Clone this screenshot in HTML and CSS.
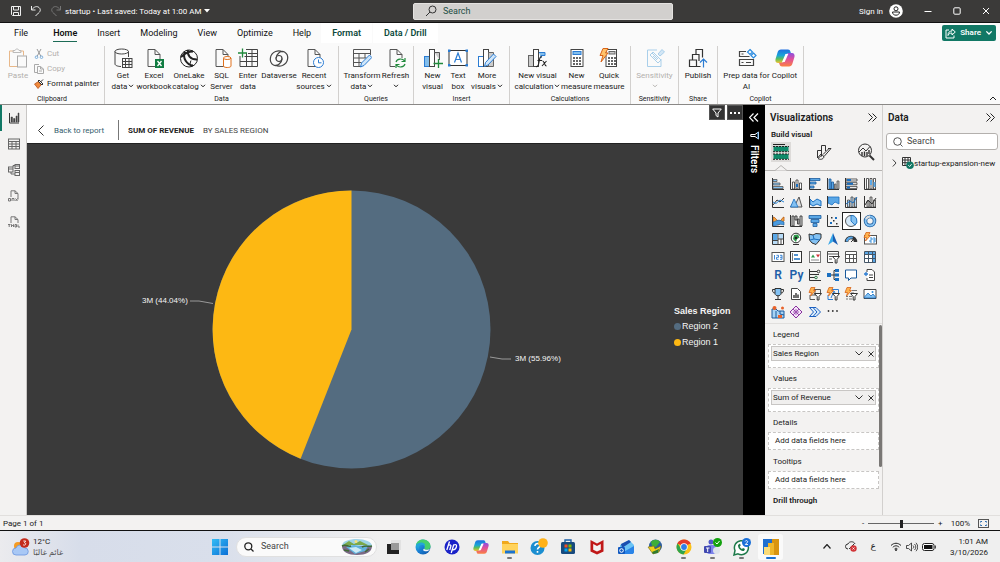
FILE: index.html
```html
<!DOCTYPE html>
<html lang="en">
<head>
<meta charset="utf-8">
<title>startup</title>
<link rel="stylesheet" href="styles.css">
</head>
<body>
<svg class="defs" aria-hidden="true">
  <symbol id="chev" viewBox="0 0 6 4"><path d="M1 .8l2 2 2-2" fill="none" stroke="currentColor"/></symbol>
  <symbol id="page" viewBox="0 0 20 20"><path d="M4 1.500h7l5 5V18.500H4zM11 1.500v5h5" fill="#fafafa" stroke="#555"/></symbol>
  <symbol id="ax" viewBox="0 0 14 14"><path d="M1.500 1v11.500H13" fill="none" stroke="#333"/></symbol>
  <symbol id="bolt" viewBox="0 0 14 14"><path d="M3 .5h4L5.500 3.500h2L2.500 9l1-3.500H1z" fill="#ffb24d" stroke="#d8641a" stroke-width=".8"/></symbol>
  <symbol id="fun" viewBox="0 0 14 14"><path d="M6.500 6.500h7L11 9.500v3.500H9.200V9.500z" fill="#fff" stroke="#333"/></symbol>
  <symbol id="copilot" viewBox="0 0 20 20">
    <path d="M6 1.500h7c1.500 0 2 .8 2.400 2l.6 2h-3c-1.500 0-2.300.8-2.800 2.200L8 13.500c-.4 1.300-1.200 1.500-2.500 1.500H3C.8 15-.1 13 .7 10.500l2-6.500C3.200 2.500 4.200 1.500 6 1.500z" fill="url(#cpa)"/>
    <path d="M14 18.500H7c-1.500 0-2-.8-2.400-2L4 14.800h2.500c1.500 0 2.300-.8 2.800-2.200L12 6.500c.4-1.300 1.200-1.500 2.500-1.500H17c2.200 0 3.100 2 2.300 4.500l-2 6.500c-.5 1.500-1.500 2.500-3.300 2.500z" fill="url(#cpb)"/>
    <path d="M10.500 6h2.800L9.700 14H7z" fill="#fff"/>
  </symbol>
  <linearGradient id="cpa" x1="0" y1="0" x2="0" y2="1"><stop offset="0" stop-color="#1f6fe0"/><stop offset=".45" stop-color="#18a5d8"/><stop offset=".7" stop-color="#5bbf5a"/><stop offset="1" stop-color="#f2c230"/></linearGradient>
  <linearGradient id="cpb" x1="0" y1="0" x2="0" y2="1"><stop offset="0" stop-color="#8a4fe0"/><stop offset=".45" stop-color="#e04f9c"/><stop offset="1" stop-color="#fb8040"/></linearGradient>
  <linearGradient id="edge" x1="0" y1="0" x2="1" y2="1"><stop offset="0" stop-color="#2cc4e8"/><stop offset=".5" stop-color="#1a7fd4"/><stop offset="1" stop-color="#0c4fa0"/></linearGradient>
  <linearGradient id="win" x1="0" y1="0" x2="1" y2="1"><stop offset="0" stop-color="#35bdf5"/><stop offset="1" stop-color="#0a6fd6"/></linearGradient>
</svg>

<header class="titlebar">
  <div class="title-left">
    <button class="plain" aria-label="Save"><svg width="12" height="12" viewBox="0 0 12 12" fill="none" stroke="#eee"><path d="M1.500 1.500h9v9h-8l-1-1zM3.500 1.500v3.500h5V1.500M3.500 10.500V7.500h5v3"/></svg></button>
    <button class="plain" aria-label="Undo"><svg width="12" height="12" viewBox="0 0 12 12" fill="none" stroke="#eee"><path d="M1.500 1v4h4M1.800 4.800C4 1.500 7 .8 9 2.500s1.500 4-.5 5.500l-3 3"/></svg></button>
    <button class="plain" aria-label="Redo"><svg width="12" height="12" viewBox="0 0 12 12" fill="none" stroke="#777"><path d="M10.500 1v4h-4M10.200 4.800C8 1.500 5 .8 3 2.500S1.500 6.500 3.500 8l3 3"/></svg></button>
    <button class="plain doc">startup • Last saved: Today at 1:00 AM <svg width="6" height="4" viewBox="0 0 6 4"><path d="M0 0h6L3 3.500z" fill="#fff"/></svg></button>
  </div>
  <label class="title-search"><svg width="12" height="12" viewBox="0 0 12 12" fill="none" stroke="#333"><circle cx="7.500" cy="4.500" r="3.500"/><path d="M5 7L1 11"/></svg><input type="text" placeholder="Search" aria-label="Search"></label>
  <div class="title-right">
    <button class="plain signin">Sign in <svg width="14" height="14" viewBox="0 0 14 14"><circle cx="7" cy="7" r="6.800" fill="#fff"/><circle cx="7" cy="4.800" r="2" fill="none" stroke="#222"/><path d="M3.500 8h7c0 2-1.500 3.200-3.500 3.200S3.500 10 3.500 8z" fill="none" stroke="#222"/></svg></button>
    <button class="plain win" aria-label="Minimize"><svg width="8" height="8" viewBox="0 0 8 8" stroke="#fff"><path d="M.5 4.500h7"/></svg></button>
    <button class="plain win" aria-label="Maximize"><svg width="8" height="8" viewBox="0 0 8 8" fill="none" stroke="#fff"><rect x=".8" y=".8" width="6.400" height="6.400" rx="1"/></svg></button>
    <button class="plain win" aria-label="Close"><svg width="8" height="8" viewBox="0 0 8 8" stroke="#fff"><path d="M1 1l6 6M7 1L1 7"/></svg></button>
  </div>
</header>

<nav class="tabs">
  <button>File</button><button class="on"><span>Home</span></button><button>Insert</button><button>Modeling</button><button>View</button><button>Optimize</button><button>Help</button><button class="ctx">Format</button><button class="ctx">Data / Drill</button>
  <button class="share"><svg width="11" height="11" viewBox="0 0 11 11" fill="none" stroke="#fff"><path d="M4 2H1v8h8V7.500M7 1l3.300 3L7 7V5C5 5 4 5.500 3 7.500 3 4.500 4.500 3 7 3z"/></svg>Share<svg width="8" height="6"><use href="#chev"/></svg></button>
</nav>

<section class="ribbon">
  <div class="group clip">
    <div class="items">
      <button class="off"><svg class="ico" viewBox="0 0 20 20" fill="none"><path d="M6 3H1.500v15.500H9M12 3h3.500v4.500" stroke="#e8b88a"/><path d="M5 4.500V2.500h2c.5-2 3.500-2 4 0h2v2z" stroke="#bbb"/><rect x="9.500" y="8" width="9" height="11" stroke="#aaa"/></svg>Paste</button>
      <div class="stack">
        <button class="off"><svg width="10" height="10" viewBox="0 0 10 10" fill="none"><path d="M3 0l4 7.500M7 0L3 7.500" stroke="#999"/><circle cx="2.500" cy="8.200" r="1.300" stroke="#7db0dd"/><circle cx="7.500" cy="8.200" r="1.300" stroke="#7db0dd"/></svg>Cut</button>
        <button class="off"><svg width="10" height="10" viewBox="0 0 10 10" fill="none" stroke="#aaa"><path d="M3 8.500H.5v-8H5M3.500 2.500h3l3 2.500v4.500h-6zM6.500 2.500V5h3M5 7h3"/></svg>Copy</button>
        <button><svg width="10" height="10" viewBox="0 0 10 10"><path d="M.5 5l4-2.500 2.500 3.500L4 9.500z" fill="#f08a3c" stroke="#b8501a" stroke-width=".8"/><path d="M4 2l1-1 4 4-1 1zM6.500 3L9 .5" fill="#fff" stroke="#333"/></svg>Format painter</button>
      </div>
    </div>
    <h2>Clipboard</h2>
  </div>
  <div class="group data">
    <div class="items">
      <button><svg class="ico" viewBox="0 0 20 20" fill="none" stroke="#444"><path d="M2 3.500V16c0 1.500 3 2.500 6 2.500M15.500 3.500V9"/><ellipse cx="8.700" cy="3.500" rx="6.800" ry="2.500"/><rect x="9.500" y="10.500" width="9.500" height="9" fill="#fafafa"/><path d="M9.500 13.500H19M9.500 16.500H19M12.500 10.500v9M16 10.500v9"/></svg>Get<br>data<svg class="cv"><use href="#chev"/></svg></button>
      <button><svg class="ico" viewBox="0 0 20 20"><use href="#page"/><rect x="11" y="11" width="9" height="9" fill="#107c41"/><path d="M13.500 13l4 5M17.500 13l-4 5" stroke="#fff" stroke-width="1.300"/></svg>Excel<br>workbook</button>
      <button><svg class="ico" viewBox="0 0 20 20" fill="none" stroke="#222"><circle cx="10" cy="10.500" r="8.500"/><path d="M6 3.500C3 10 8 17 14 17.500M9 2c-1 5 2 9.500 9 9.500M2 9c3-3 7-5.500 12-5.500" stroke-width="2"/><path d="M12 12.500c-1 2-1 4 0 6"/></svg>OneLake<br>catalog<svg class="cv"><use href="#chev"/></svg></button>
      <button><svg class="ico" viewBox="0 0 20 20"><use href="#page"/><path d="M11.500 10v8c0 2 7.500 2 7.500 0v-8" fill="#fff" stroke="#e0701c"/><ellipse cx="15.200" cy="10" rx="3.700" ry="1.500" fill="#fff" stroke="#e0701c"/></svg>SQL<br>Server</button>
      <button><svg class="ico" viewBox="0 0 20 20" fill="none" stroke="#444"><path d="M8 1.500h11.500v17H2V8M2 13.500h17.500M6.500 8.500h13M8.500 5v13.500M14 1.500v17M10 5.500h9.500"/><path d="M0 5h9M4.500.5v9" stroke="#218a3d" stroke-width="1.300"/></svg>Enter<br>data</button>
      <button><svg class="ico" viewBox="0 0 20 20" fill="none" stroke="#444" stroke-width="1.200"><circle cx="10" cy="10.500" r="3"/><path d="M13 10.500c0 4-4.500 8.500-8.500 6.500C-.5 14 .5 6 6.500 3.500c3-1 5.500-.5 7 .5M7 10.500c0-4 4.500-8.500 8.500-6.500 5 3 4 11-2 13.500-3 1-5.500.5-7-.5"/></svg>Dataverse</button>
      <button><svg class="ico" viewBox="0 0 20 20"><use href="#page"/><circle cx="14.500" cy="14.500" r="5" fill="#fff" stroke="#2b7cd3"/><path d="M14.500 11.500v3.300h3" fill="none" stroke="#2b7cd3"/></svg>Recent<br>sources<svg class="cv"><use href="#chev"/></svg></button>
    </div>
    <h2>Data</h2>
  </div>
  <div class="group queries">
    <div class="items">
      <button><svg class="ico" viewBox="0 0 20 20" fill="none" stroke="#555"><path d="M10 18.500H1.500V1.500h17V7M1.500 5.500h17M1.500 10h13M1.500 14.500h8M7 5.500v13M13 5.500V10"/><path d="M8.500 19l1-4L17.500 7l2.300 2.500L12 17.500z" fill="#cfe6fa" stroke="#2b7cd3"/></svg>Transform<br>data<svg class="cv"><use href="#chev"/></svg></button>
      <button><svg class="ico" viewBox="0 0 20 20"><use href="#page"/><rect x="9" y="10" width="11" height="10" fill="#fafafa"/><path d="M10 14c1-3.500 6.500-4 8.500-1M19 10v3.500h-3.500M19 16c-1 3.500-6.500 4-8.500 1M10 20v-3.500h3.500" fill="none" stroke="#218a3d" stroke-width="1.200"/></svg>Refresh<br><svg class="cv"><use href="#chev"/></svg></button>
    </div>
    <h2>Queries</h2>
  </div>
  <div class="group insert">
    <div class="items">
      <button><svg class="ico" viewBox="0 0 20 20"><rect x="1.500" y="8.500" width="5" height="10" fill="#83beec" stroke="#2b7cd3"/><rect x="6.500" y="1.500" width="5" height="17" fill="#fff" stroke="#444"/><path d="M11.500 4.500h5V12" fill="#ccc" stroke="#555"/><path d="M10.500 15.500h9.500M15.500 11v9" stroke="#218a3d" stroke-width="1.300"/></svg>New<br>visual</button>
      <button><svg class="ico" viewBox="0 0 20 20"><rect x="1" y="2.500" width="18" height="15" fill="#fff" stroke="#333"/><path d="M0 1.500h2.500V4H0zM17.500 1.500H20V4h-2.500zM0 16h2.500v2.500H0zM17.500 16H20v2.500h-2.500z" fill="#2b7cd3"/><path d="M6.500 14.500L10 5l3.500 9.500M7.500 11.500h5" fill="none" stroke="#2b7cd3" stroke-width="1.200"/></svg>Text<br>box</button>
      <button><svg class="ico" viewBox="0 0 20 20"><rect x="1.500" y="8.500" width="5" height="10" fill="#fff" stroke="#2b7cd3"/><rect x="6.500" y="1.500" width="5" height="17" fill="#fff" stroke="#444"/><path d="M11.500 4.500h5v14h-5z" fill="#ccc" stroke="#666"/><path d="M7.500 18.500l1-4L16.500 6l2.500 2.500-8 8.500z" fill="#cfe6fa" stroke="#2b7cd3"/></svg>More<br>visuals<svg class="cv"><use href="#chev"/></svg></button>
    </div>
    <h2>Insert</h2>
  </div>
  <div class="group calc">
    <div class="items">
      <button><svg class="ico" viewBox="0 0 20 20" fill="none"><rect x="1.500" y="7.500" width="5" height="11" fill="#ccc" stroke="#666"/><rect x="6.500" y="1.500" width="5" height="17" fill="#fff" stroke="#444"/><path d="M12 4.500h6v3h-4V10" fill="#83beec" stroke="#2b7cd3"/><path d="M15 9c-2-1-2.500 2-3 5s-1 5-3 4.500M10.500 12.500H15M15.500 13c2-.5 1.500 5 4 5M19.500 13l-4.500 5" stroke="#222" stroke-width="1.100"/></svg>New visual<br>calculation<svg class="cv"><use href="#chev"/></svg></button>
      <button><svg class="ico" viewBox="0 0 20 20"><rect x="4" y="1.500" width="12" height="17" fill="#fff" stroke="#444"/><rect x="6" y="3.500" width="8" height="3" fill="#83beec" stroke="#2b7cd3"/><path d="M6 10h8M6 13h8M6 16h8" stroke="#333" stroke-width="1.600" stroke-dasharray="2 1"/></svg>New<br>measure</button>
      <button><svg class="ico" viewBox="0 0 20 20"><rect x="7" y="1.500" width="10.500" height="17" fill="#fff" stroke="#444"/><rect x="10" y="3.500" width="6" height="2.500" fill="#ccc" stroke="#666"/><path d="M9 10h8M9 13h8M9 16h8" stroke="#333" stroke-width="1.600" stroke-dasharray="2 1"/><path d="M4 .5h5L6.500 5H9l-7 9 2-6.500H1z" fill="#ffc36b" stroke="#d8641a"/></svg>Quick<br>measure</button>
    </div>
    <h2>Calculations</h2>
  </div>
  <div class="group sens">
    <div class="items">
      <button class="off"><svg class="ico" viewBox="0 0 20 20" fill="none" stroke="#a9cfea"><path d="M12 2H2.500v16.500h13.500V11"/><path d="M5 7l3-3 8 8-3 3zM8 8l4 4M7 5l6 6"/><path d="M13 6l4-4.500 2.500 2.500-4.500 4z" fill="#d3e6f5"/></svg>Sensitivity<br><svg class="cv"><use href="#chev"/></svg></button>
    </div>
    <h2>Sensitivity</h2>
  </div>
  <div class="group pub">
    <div class="items">
      <button><svg class="ico" viewBox="0 0 20 20" fill="none" stroke="#333" stroke-width="1.200"><path d="M8 6V1.500h6.500v8M4.500 12V6.500h6.500V13M1.500 12h7v6.500h-7zM8.500 18.500h4"/><path d="M15.500 19.500v-8M12 14.500l3.500-3.500 3.500 3.500" stroke="#2b7cd3"/></svg>Publish</button>
    </div>
    <h2>Share</h2>
  </div>
  <div class="group cop">
    <div class="items">
      <button><svg class="ico" viewBox="0 0 20 20" fill="none" stroke="#444" stroke-width="1.200"><path d="M9 3.500H2.500v5h10M2.500 11.500h14v6h-14zM4.500 6h2M4.500 14.500h2M9 14.500h5"/><path d="M13 1.500l2.500 2.500L13 6.500 10.500 4zM16.500 5l2.500 2.500L16.500 10 14 7.500z" stroke="#2b8be0"/></svg>Prep data for<br>AI</button>
      <button><svg class="ico" viewBox="0 0 20 20"><use href="#copilot"/></svg>Copilot</button>
    </div>
    <h2>Copilot</h2>
  </div>
  <button class="plain collapse" aria-label="Collapse ribbon"><svg width="8" height="5" viewBox="0 0 8 5" fill="none" stroke="#222"><path d="M1 4l3-3 3 3"/></svg></button>
</section>

<main class="work">
  <nav class="rail">
    <button class="on" aria-label="Report view"><svg width="12" height="12" viewBox="0 0 12 12"><path d="M1.500 1v10H11" fill="none" stroke="#333"/><path d="M3 5h1.500v5H3zM5.500 6.500H7V10H5.500zM8 4h1.200v6H8zM10 1h1v9h-1z" fill="#444" stroke="#444" stroke-width=".5"/></svg></button>
    <button aria-label="Table view"><svg width="12" height="12" viewBox="0 0 12 12" fill="none" stroke="#666"><rect x=".5" y="1" width="11" height="10"/><path d="M.5 3.500h11M.5 6h11M.5 8.500h11M4 3.500V11M8 3.500V11"/></svg></button>
    <button aria-label="Model view"><svg width="12" height="12" viewBox="0 0 12 12" fill="none" stroke="#666"><rect x=".5" y="3" width="4.500" height="5"/><rect x="7" y=".5" width="4.500" height="4"/><rect x="7" y="6.500" width="4.500" height="5"/><path d="M.5 5H5M7 2h4.500M7 8.500h4.500M3 8v2h4M5 3V1.500h2"/></svg></button>
    <button aria-label="DAX query view"><svg width="12" height="12" viewBox="0 0 12 12" fill="none" stroke="#777"><path d="M3 7V.8h4L10 3.500v6M7 .8v2.700h3"/><path d="M.5 8.500v2.500h2v-2.500zM4 11V8.500h2V11M7.500 8.500l2 2.500M9.500 8.500l-2 2.500"/></svg></button>
    <button aria-label="TMDL view"><svg width="12" height="12" viewBox="0 0 12 12" fill="none" stroke="#777"><path d="M3 7V.8h4L10 3.500V7M7 .8v2.700h3"/><path d="M0 8.500h2.500M1.200 8.500V11M3.500 11V8.500l1 1.300 1-1.300V11M7 8.500V11h1.500V8.500zM10 8.500V11h2"/></svg></button>
  </nav>

  <section class="canvas">
    <header class="drillhead">
      <button class="plain back"><svg width="6" height="11" viewBox="0 0 6 11" fill="none" stroke="#333"><path d="M5.500.5l-5 5 5 5"/></svg>Back to report</button>
      <strong>SUM OF REVENUE</strong><span>BY SALES REGION</span>
      <div class="vis-tools">
        <button aria-label="Filters"><svg width="10" height="10" viewBox="0 0 10 10" fill="none" stroke="#fff"><path d="M.7 1h8.600L6 5v4L4 7.500V5z"/></svg></button>
        <button aria-label="More options"><svg width="10" height="2" viewBox="0 0 10 2" fill="#fff"><path d="M0 0h2v2H0zM4 0h2v2H4zM8 0h2v2H8z"/></svg></button>
      </div>
    </header>
    <div class="chart">
      <svg class="pie" viewBox="0 0 646 371" role="img" aria-label="Sum of Revenue by Sales Region">
        <circle cx="324.500" cy="185.500" r="139" fill="#546c80"/>
        <path d="M324.500 185.500V46.500A139 139 0 0 0 273.600 314.800z" fill="#fdb813"/>
        <path d="M163 157h9l14 2.500M463 213l12 2h9" fill="none" stroke="#999"/>
        <text x="115" y="159">3M (44.04%)</text>
        <text x="488" y="217">3M (55.96%)</text>
      </svg>
      <div class="legend"><b>Sales Region</b><ul><li class="r2">Region 2</li><li class="r1">Region 1</li></ul></div>
    </div>
  </section>

  <button class="filters"><svg width="10" height="9" viewBox="0 0 10 9" fill="none" stroke="#fff" stroke-width="1.200"><path d="M4.500.5l-4 4 4 4M9 .5l-4 4 4 4"/></svg><svg width="9" height="9" viewBox="0 0 9 9" fill="none" stroke="#fff"><path d="M8.500 1v7L5 5.500H.8v-2H5z"/><path d="M8 1v7" stroke="#4aa0e8"/></svg><span>Filters</span></button>

  <aside class="viz">
    <h3>Visualizations<svg width="9" height="9" viewBox="0 0 9 9" fill="none" stroke="#222"><path d="M.5.5l4 4-4 4M4.500.5l4 4-4 4"/></svg></h3>
    <h4>Build visual</h4>
    <div class="modes">
      <button class="on" aria-label="Build visual"><svg width="18" height="18" viewBox="0 0 18 18"><path d="M1 1.500h12" stroke="#222"/><rect x="1.500" y="3.500" width="15" height="5" fill="#0f8a6a"/><rect x="1.500" y="11" width="15" height="5" fill="#0f8a6a"/><path d="M1 3.500h16M1 8.700h16M1 11h16M1 16.300h16" stroke="#222" stroke-dasharray="2 1"/></svg></button>
      <button aria-label="Format visual"><svg width="18" height="18" viewBox="0 0 18 18" fill="none" stroke="#333"><path d="M2.500 7.500h4v6M6.500 9V2.500h4V8M2.500 7.500V15L6 11M13 5.500h3l-7 8M13.500 6L8 11.500"/><path d="M3 15.500c2 1.500 5 1 6-1.500l-1.500-2C5.500 12 5 14.500 3 15.500z"/></svg></button>
      <button aria-label="Analytics"><svg width="18" height="18" viewBox="0 0 18 18" fill="none" stroke="#333"><circle cx="8" cy="7.500" r="6.500"/><path d="M2 9l4-4 3 3 4-4.500"/><path d="M5 13V9M7.500 13V8.500M10 13V9M12 11V7" stroke-width="1.400"/><path d="M12.500 12.500L17 17" stroke-width="2"/></svg></button>
    </div>
    <svg class="notch" width="12" height="6" viewBox="0 0 12 6"><path d="M0 5.500L6 .5l6 5" fill="#f3f2f1" stroke="#b5b3b1"/></svg>
    <div class="gallery">
      <button aria-label="Stacked bar chart"><svg viewBox="0 0 14 14"><path d="M2 2.500h4v2H2zM2 6h7v2H2zM2 9.500h10v2H2z" fill="#83c1f2" stroke="#555" stroke-width=".8"/><use href="#ax"/></svg></button>
      <button aria-label="Stacked column chart"><svg viewBox="0 0 14 14"><path d="M3.500 5h2v7h-2zM7 3h2v9H7zM10.500 6h2v6h-2z" fill="#fff" stroke="#333" stroke-width=".8"/><path d="M7 7h2v3H7z" fill="#1a6fc0"/><use href="#ax"/></svg></button>
      <button aria-label="Clustered bar chart"><svg viewBox="0 0 14 14"><path d="M2 1.500h10v2H2zM2 5h6v2H2zM2 9h4v2H2z" fill="#5aa7e6" stroke="#1a5a9c" stroke-width=".8"/><use href="#ax"/></svg></button>
      <button aria-label="Clustered column chart"><svg viewBox="0 0 14 14"><path d="M3 2h2v10H3zM5.500 5h2v7h-2z" fill="#5aa7e6" stroke="#1a5a9c" stroke-width=".8"/><path d="M8.500 7h1.500v5H8.500zM11 4h2v8h-2z" fill="#bbb" stroke="#555" stroke-width=".8"/><use href="#ax"/></svg></button>
      <button aria-label="100% stacked bar chart"><svg viewBox="0 0 14 14"><path d="M2 2h11v2H2zM2 5.700h11v2H2zM2 9.400h11v2H2z" fill="#fff" stroke="#333" stroke-width=".8"/><path d="M3 2h4v2H3zM3 5.700h6v2H3zM3 9.400h3v2H3z" fill="#1a6fc0"/><use href="#ax"/></svg></button>
      <button aria-label="100% stacked column chart"><svg viewBox="0 0 14 14"><path d="M3.500 1.500h2V12h-2zM7 1.500h2V12H7zM10.500 1.500h2V12h-2z" fill="#fff" stroke="#333" stroke-width=".8"/><path d="M7 3h2v5H7zM10.500 5h2v5h-2z" fill="#5aa7e6"/><use href="#ax"/></svg></button>

      <button aria-label="Line chart"><svg viewBox="0 0 14 14" fill="none"><path d="M2 10l4-5 3 2 4-4" stroke="#333"/><path d="M2 7l3 1.500L9 5l4 2" stroke="#2b88d8"/><use href="#ax"/></svg></button>
      <button aria-label="Area chart"><svg viewBox="0 0 14 14"><path d="M1.500 12l3-5 2 2 3.500-7 3 10z" fill="#ddd" stroke="#444" stroke-width=".9"/><path d="M1.500 12L5 4l4 8z" fill="#83c1f2" stroke="#1a6fc0" stroke-width=".8"/></svg></button>
      <button aria-label="Stacked area chart"><svg viewBox="0 0 14 14"><path d="M2 4l3 3 4-3 4 2v5L9 9l-4 2-3-2z" fill="#83c1f2" stroke="#1a6fc0"/><use href="#ax"/></svg></button>
      <button aria-label="100% stacked area chart"><svg viewBox="0 0 14 14"><path d="M2 2h11v7L9 7l-3 3-4-2z" fill="#5aa7e6" stroke="#1a6fc0" stroke-width=".8"/><use href="#ax"/></svg></button>
      <button aria-label="Line and stacked column chart"><svg viewBox="0 0 14 14" fill="none"><path d="M3.500 5h2v7h-2zM7 2h2v10H7zM10.500 3h2v9h-2z" fill="#b7d9f5" stroke="#444" stroke-width=".8"/><path d="M2 9l4-3 3 2 4-6" stroke="#1a6fc0"/><use href="#ax"/></svg></button>
      <button aria-label="Line and clustered column chart"><svg viewBox="0 0 14 14" fill="none"><path d="M4 6h2v6H4zM7 2h2v10H7zM10.500 5h2v7h-2z" fill="#ccc" stroke="#444" stroke-width=".8"/><path d="M2 10l3-5 4 4 4-6" stroke="#333"/><use href="#ax"/></svg></button>

      <button aria-label="Ribbon chart"><svg viewBox="0 0 14 14"><path d="M2 3c3 0 3 4 6 4s3-4 5-4v4c-3 0-3 4-6 4S4 8 2 8z" fill="#f4a442" stroke="#b85a12" stroke-width=".8"/><path d="M2 8c3 0 4-4 11 0v3c-5-2-7 1-11 1z" fill="#4a9be0" stroke="#1a5a9c" stroke-width=".6"/><use href="#ax"/></svg></button>
      <button aria-label="Waterfall chart"><svg viewBox="0 0 14 14"><path d="M3 2h2v10H3zM6 2h2v4H6zM8.500 5h1.500v5H8.500zM11 2h2v10h-2z" fill="#ddd" stroke="#333" stroke-width=".9"/><use href="#ax"/></svg></button>
      <button aria-label="Funnel"><svg viewBox="0 0 14 14"><path d="M1 1.500h12v3H1zM3 5.500h8v3H3zM5 9.500h4v3H5z" fill="#5aa7e6" stroke="#1a5a9c" stroke-width=".8"/></svg></button>
      <button aria-label="Scatter chart"><svg viewBox="0 0 14 14"><path d="M4 8h2v2H4zM9 3h2v2H9z" fill="#1a6fc0"/><path d="M5 3h1.500v1.500H5zM7 6h1.500v1.500H7zM10 9h1.500v1.500H10z" fill="#333"/><use href="#ax"/></svg></button>
      <button class="picked" aria-label="Pie chart"><svg viewBox="0 0 14 14"><circle cx="7" cy="7" r="5.500" fill="#d5e9f9" stroke="#555"/><path d="M7 1.500V7l4 4.200A5.500 5.500 0 0 0 7 1.500z" fill="#83c1f2" stroke="#1a6fc0" stroke-width=".9"/></svg></button>
      <button aria-label="Donut chart"><svg viewBox="0 0 14 14" fill="none"><circle cx="7" cy="7" r="4.500" stroke="#1a5a9c" stroke-width="3.500"/><circle cx="7" cy="7" r="4.500" stroke="#83c1f2" stroke-width="2"/><path d="M7 2.500A4.500 4.500 0 0 0 3 5" stroke="#ddd" stroke-width="2"/></svg></button>

      <button aria-label="Treemap"><svg viewBox="0 0 14 14"><path d="M1.500 1.500h11v11h-11z" fill="#fff" stroke="#333"/><path d="M2 2h4.500v6H2z" fill="#5aa7e6"/><path d="M8 2h4v5H8zM2 9h4.500v3H2z" fill="#b7dbf7"/><path d="M7 1.500v11M1.500 8.500H7M7 7h5.500M10 7v5.500" stroke="#444"/></svg></button>
      <button aria-label="Map"><svg viewBox="0 0 14 14"><circle cx="7" cy="6" r="4.800" fill="#fff" stroke="#333"/><path d="M5 3l4-.5 1.500 3L8 7l-1 3-3-3z" fill="#2e9a4a"/><circle cx="7" cy="6" r="1.300" fill="#222"/><path d="M4 12.500h6" stroke="#333"/></svg></button>
      <button aria-label="Filled map"><svg viewBox="0 0 14 14"><path d="M1 2l4 1 3-1.500 5 .5v4l-2 3-3 3.500-4-1.500L1.500 8z" fill="#83c1f2" stroke="#333"/><path d="M5 3l1 4 6 1M6 7l-4 1" fill="none" stroke="#1a6fc0"/></svg></button>
      <button aria-label="Azure map"><svg viewBox="0 0 14 14"><path d="M7 1l5 12-5-3.500z" fill="#1a5fb4"/><path d="M7 1L2 13l5-3.500z" fill="#39a7e8"/></svg></button>
      <button aria-label="Gauge"><svg viewBox="0 0 14 14" fill="none"><path d="M2.500 10a4.500 4.500 0 0 1 9 0" stroke="#333" stroke-width="3.500"/><path d="M2.700 9.500a4.500 4.500 0 0 1 6-3.700" stroke="#5aa7e6" stroke-width="2.200"/><path d="M7 10l2-2" stroke="#333"/></svg></button>
      <button aria-label="Card (new)"><svg viewBox="0 0 14 14"><rect x="1.500" y="3.500" width="12" height="8.500" fill="#fff" stroke="#555"/><path d="M7 6h2v2H7v2h2M10 6h2v4h-2M10 8h2" fill="none" stroke="#2b88d8" stroke-width=".9"/><use href="#bolt"/></svg></button>

      <button aria-label="Card"><svg viewBox="0 0 14 14"><rect x="1" y="2.500" width="12" height="9" fill="#fff" stroke="#555"/><path d="M3.500 5v4.500M5.500 5.300h2v2h-2v2h2M9 5.300h2v4H9M9 7.300h2" fill="none" stroke="#2b7cd3" stroke-width=".9"/></svg></button>
      <button aria-label="Multi-row card"><svg viewBox="0 0 14 14"><rect x="1.500" y="1.500" width="11" height="11" fill="#fff" stroke="#333"/><path d="M5 5h4M5 9h6" stroke="#1a6fc0" stroke-width="1.500"/><path d="M3.500 3v8" stroke="#777"/></svg></button>
      <button aria-label="KPI"><svg viewBox="0 0 14 14"><rect x="1.500" y="1.500" width="11" height="11" fill="#fff" stroke="#777"/><path d="M3 7.500L5 4.500l2 3z" fill="#2e9a4a"/><path d="M8 4.500h4l-2 3z" fill="#d13438"/><path d="M3 10h8" stroke="#888"/></svg></button>
      <button aria-label="Slicer"><svg viewBox="0 0 14 14"><path d="M12.500 6V1.500h-11v11H7" fill="#fff" stroke="#444"/><path d="M1.500 4h11M3 6.500h4M3 9h3" stroke="#555"/><use href="#fun"/></svg></button>
      <button aria-label="Table"><svg viewBox="0 0 14 14"><path d="M1.500 1.500h11v11h-11zM1.500 4.500h11M1.500 8.500h11M5.500 4.500v8M9.500 4.500v8" fill="#fff" stroke="#555"/></svg></button>
      <button aria-label="Matrix"><svg viewBox="0 0 14 14"><path d="M1.500 1.500h11v11h-11z" fill="#fff"/><path d="M2 2h11v3H2zM9 5h4v8H9z" fill="#5aa7e6"/><path d="M1.500 1.500h11v11h-11zM1.500 4.500h11M1.500 8.500h11M5.500 1.500v11M9.500 1.500v11" fill="none" stroke="#456"/></svg></button>

      <button class="letter">R</button>
      <button class="letter">Py</button>
      <button aria-label="Key influencers"><svg viewBox="0 0 14 14" fill="none"><path d="M1.500 1v11.500H13M2 3.500h7M2 6.500h9M2 9.500h5" stroke="#333"/><circle cx="10.500" cy="3.500" r="1.300" stroke="#333"/><circle cx="8" cy="9.500" r="1.300" stroke="#2e7a4a"/></svg></button>
      <button aria-label="Decomposition tree"><svg viewBox="0 0 14 14"><path d="M5 7h3M8 2.500v9M8 2.500h1M8 11.500h1M8 7h1" fill="none" stroke="#333"/><path d="M1 5h4v4H1zM9 1h4v3H9zM9 5.500h4v3H9zM9 10h4v3H9z" fill="#1a6fc0"/></svg></button>
      <button aria-label="Q&amp;A"><svg viewBox="0 0 14 14"><path d="M1.500 2h11v8H7l-2.500 2.500V10h-3z" fill="#fff" stroke="#1a5a9c"/></svg></button>
      <button aria-label="Smart narrative"><svg viewBox="0 0 14 14" fill="none"><path d="M4 4V1.500h5L11.500 4v8.500H4V10" fill="#fff" stroke="#444"/><path d="M6 7h4M6 9.500h4" stroke="#444"/><path d="M1 6h4M3 4v4" stroke="#2b7cd3" stroke-width="1.300"/></svg></button>

      <button aria-label="Metrics"><svg viewBox="0 0 14 14"><path d="M4 1.500h6v5c0 3-6 3-6 0z" fill="#83c1f2" stroke="#333"/><path d="M4 2.500H1.500C1.500 5 2 6 4 6M10 2.500h2.500C12.500 5 12 6 10 6M7 9v3M4 12.500h6" fill="none" stroke="#333"/></svg></button>
      <button aria-label="Paginated report"><svg viewBox="0 0 14 14"><path d="M2.500 1.500h6l3 3v8h-9z" fill="#fff" stroke="#444"/><path d="M5 11V8M7 11V6M9 11V7.500" stroke="#222" stroke-width="1.300"/></svg></button>
      <button aria-label="Button slicer"><svg viewBox="0 0 14 14"><path d="M6 2.500h6.500V6M2 8v4.500h5M7 3v5M3 8h5" fill="none" stroke="#555"/><use href="#bolt"/><use href="#fun"/></svg></button>
      <button aria-label="Text slicer"><svg viewBox="0 0 14 14"><path d="M6 2.500h6.500V6M2 8v4.500h5M5 11l3-7 2 4" fill="none" stroke="#2b7cd3"/><use href="#bolt"/><use href="#fun"/></svg></button>
      <button aria-label="List slicer"><svg viewBox="0 0 14 14"><path d="M8 3.500h5M7 6h3M2 9.500h2M5 9.500h3M2 12h2M5 12h3" fill="none" stroke="#777"/><use href="#bolt"/><use href="#fun"/></svg></button>
      <button aria-label="Image"><svg viewBox="0 0 14 14"><path d="M1 2.500h12v9H1z" fill="#fff" stroke="#444"/><path d="M1.500 10l3.500-4 3 3 2-2 2.500 3v1h-11z" fill="#83c1f2" stroke="#1a6fc0" stroke-width=".8"/><circle cx="9.500" cy="5" r="1" fill="#2b88d8"/></svg></button>

      <button aria-label="ArcGIS map"><svg viewBox="0 0 14 14"><path d="M1 4h4l2 2h6v7H1z" fill="#a6d3f5" stroke="#1a5a9c"/><path d="M5 6v7M9 6v3l4 1" stroke="#1a5a9c" fill="none"/><circle cx="3.500" cy="3" r="2" fill="#e8622a"/><circle cx="11.500" cy="3" r="1.500" fill="#e8622a"/><path d="M7 10h4v3H7z" fill="#e8622a"/></svg></button>
      <button aria-label="Power Apps"><svg viewBox="0 0 14 14"><path d="M7 1l6 6-6 6-6-6z" fill="#f3e4f7" stroke="#8a2fa0"/><path d="M7 4.500L9.500 7 7 9.500 4.500 7zM4 4l6 6M10 4l-6 6" fill="none" stroke="#8a2fa0" stroke-width=".8"/></svg></button>
      <button aria-label="Power Automate"><svg viewBox="0 0 14 14"><path d="M1.500 2.500H8L12.500 7 8 11.500H1.500L5.500 7z" fill="#dcedfb" stroke="#1a5fc0"/><path d="M5 2.500L9 7l-4 4.500" fill="none" stroke="#1a5fc0"/></svg></button>
      <button aria-label="Get more visuals"><svg viewBox="0 0 14 14" fill="#333"><circle cx="2.500" cy="6" r=".9"/><circle cx="6.800" cy="6" r=".9"/><circle cx="11" cy="6" r=".9"/></svg></button>
    </div>
    <div class="wells">
      <h5>Legend</h5>
      <div class="well"><div class="pill">Sales Region<button aria-label="Field options"><svg width="8" height="5" viewBox="0 0 8 5" fill="none" stroke="#333"><path d="M.5.5L4 4 7.500.5"/></svg></button><button aria-label="Remove Sales Region"><svg width="6" height="6" viewBox="0 0 6 6" stroke="#333"><path d="M.5.5l5 5M5.500.5l-5 5"/></svg></button></div></div>
      <h5>Values</h5>
      <div class="well"><div class="pill">Sum of Revenue<button aria-label="Field options"><svg width="8" height="5" viewBox="0 0 8 5" fill="none" stroke="#333"><path d="M.5.5L4 4 7.500.5"/></svg></button><button aria-label="Remove Sum of Revenue"><svg width="6" height="6" viewBox="0 0 6 6" stroke="#333"><path d="M.5.5l5 5M5.500.5l-5 5"/></svg></button></div></div>
      <h5>Details</h5>
      <div class="well empty">Add data fields here</div>
      <h5>Tooltips</h5>
      <div class="well empty">Add data fields here</div>
      <h5 class="drill">Drill through</h5>
      <i class="thumb"></i>
    </div>
  </aside>

  <aside class="fields">
    <h3>Data<svg width="9" height="9" viewBox="0 0 9 9" fill="none" stroke="#222"><path d="M.5.5l4 4-4 4M4.500.5l4 4-4 4"/></svg></h3>
    <label class="field-search"><svg width="10" height="10" viewBox="0 0 10 10" fill="none" stroke="#555"><circle cx="4.500" cy="4.500" r="3.800"/><path d="M7.300 7.300L9.500 9.500"/></svg><input type="text" placeholder="Search" aria-label="Search fields"></label>
    <button class="tree"><svg width="5" height="8" viewBox="0 0 5 8" fill="none" stroke="#444"><path d="M.8.5L4 4 .8 7.500"/></svg><svg width="12" height="12" viewBox="0 0 12 12"><path d="M.5.500h8v8h-8zM.5 3h8M.5 5.700h8M3 .5v8M6 .5v8" fill="#fff" stroke="#333"/><circle cx="8" cy="8.200" r="3.800" fill="#117865"/><path d="M6.300 8.200l1.300 1.300 2-2.300" fill="none" stroke="#fff" stroke-width=".9"/></svg>startup-expansion-new</button>
  </aside>
</main>

<footer class="status">
  <span>Page 1 of 1</span>
  <div class="zoomer"><button class="plain">-</button><input type="range" min="10" max="190" value="100" aria-label="Zoom"><button class="plain">+</button><span class="pct">100%</span><button class="plain" aria-label="Fit to page"><svg width="11" height="9" viewBox="0 0 11 9" fill="none"><rect x=".5" y=".5" width="10" height="8" stroke="#555"/><path d="M2.500 3.500v-1h1.500M7 2.500h1.500v1M2.500 5.500v1h1.500M7 6.500h1.500v-1" stroke="#2b6cb0"/></svg></button></div>
</footer>

<footer class="taskbar">
  <button class="weather"><svg width="18" height="18" viewBox="0 0 18 18"><circle cx="6" cy="8" r="4" fill="#f59b23"/><path d="M4 17a3.500 3.500 0 0 1 0-7 4.500 4.500 0 0 1 8.500 0A3.500 3.500 0 0 1 13 17z" fill="#a9c8f5" stroke="#6a96e0" stroke-width=".8"/><circle cx="12.500" cy="5" r="4.800" fill="#c42b1c"/><path d="M11.300 3h2.400l-1.300 1.700c2 .2 1.600 2.500-.2 2.400-.6 0-1-.3-1.200-.6" fill="none" stroke="#fff" stroke-width=".9"/></svg><span>12°C<small lang="ar" dir="rtl">غائم غالبًا</small></span></button>
  <div class="apps">
    <button aria-label="Start"><svg width="16" height="16" viewBox="0 0 16 16" fill="url(#win)"><path d="M0 0h7.500v7.500H0zM8.500 0H16v7.500H8.500zM0 8.500h7.500V16H0zM8.500 8.500H16V16H8.500z"/></svg></button>
    <label class="task-search"><svg width="10" height="10" viewBox="0 0 10 10" fill="none" stroke="#222" stroke-width="1.300"><circle cx="4.300" cy="4.300" r="3.500"/><path d="M7 7l2.500 2.500"/></svg><input type="text" placeholder="Search" aria-label="Search Windows"><svg width="32" height="18" viewBox="0 0 32 18"><path d="M1 8C1 3 8 1 16 1s15 3 15 7z" fill="#9ed3e8"/><path d="M2 7l6-4 5 3 6-3 8 4z" fill="#7ba84a"/><circle cx="15" cy="3.500" r="1.500" fill="#f6e27a"/><path d="M1 8c0 6 6 9 15 9s15-3 15-9z" fill="#7b6a86"/><path d="M5 9l8-2 9 2 6-2-4 6-10 3z" fill="#5fb2dc"/><path d="M8 10l7-1 6 3-6 3z" fill="#cdeaf6"/><path d="M1 8c4-2 6 1 9 0M21 9c4-2 6 0 10-1M3 12l5 1M24 14l4-3" stroke="#3f6a35" stroke-width="1.500" fill="none"/></svg></label>
    <button aria-label="Task view"><svg width="16" height="16" viewBox="0 0 16 16"><path d="M5 1h10v10H5z" fill="#e2e2e2"/><path d="M1 5h12v10H1z" fill="#222"/><path d="M5 4h8v7H5z" fill="#999"/></svg></button>
    <button aria-label="Edge"><svg width="16" height="16" viewBox="0 0 16 16"><circle cx="8" cy="8" r="7.500" fill="url(#edge)"/><path d="M1 6C2 2 5 .5 8 .5c5 0 8 4 7.500 7.500C15 11 10 11.500 9 10c2-2 0-5-3-5-2 0-4 .5-5 1z" fill="#46cf6d"/><path d="M1 6c2-3 7-3.500 9-.5L9 10c2-2 0-4-2-4-2.500 0-4 2-3 5z" fill="#22a6d8"/><path d="M9 9.800c1 1.500 4.500 1.200 6 .2-1 2-3 2.500-5 2.200S7.500 11 9 9.800z" fill="#f2f4f6"/></svg></button>
    <button aria-label="HP"><svg width="16" height="16" viewBox="0 0 16 16"><circle cx="8" cy="8" r="7.500" fill="#1a22c8"/><path d="M5.500 2.500l-2.700 8.500M4.300 6.500c2-1 3-.5 2.500 1L5.700 11M9.800 5.500L7.200 14M9.500 6c3-1 3.500 0 2.800 2.300-.7 2.200-1.500 2.700-3.800 2.500" stroke="#fff" stroke-width="1.300" fill="none"/></svg></button>
    <button aria-label="Copilot"><svg width="16" height="16" viewBox="0 0 20 20"><use href="#copilot"/></svg></button>
    <button class="run" aria-label="File Explorer"><svg width="16" height="16" viewBox="0 0 16 16"><path d="M0 2h6l1.500 2H16v10H0z" fill="#f0a91c"/><path d="M0 5h16v9.500H0z" fill="#ffd35c"/><path d="M3 11.500h10v3H3z" fill="#1a73d0"/></svg></button>
    <button aria-label="Get Help"><svg width="18" height="18" viewBox="0 0 18 18"><circle cx="7.500" cy="10" r="7" fill="#1b8ed0"/><path d="M5 8c0-3.500 5.500-3 5 0-.3 1.500-2.300 1.500-2.500 3.500M7.500 13v1.800" stroke="#fff" stroke-width="1.600" fill="none"/><circle cx="13" cy="5" r="4.800" fill="#ffb21a"/></svg></button>
    <button aria-label="Microsoft Store"><svg width="16" height="16" viewBox="0 0 16 16"><path d="M5 3V1h6v2" fill="none" stroke="#1a5fa8" stroke-width="1.400"/><rect x="1" y="3" width="14" height="12" rx="1.500" fill="#174a7e"/><path d="M4.500 5.500h3v3h-3z" fill="#f25022"/><path d="M8.500 5.500h3v3h-3z" fill="#7fba00"/><path d="M4.500 9.500h3v3h-3z" fill="#00a4ef"/><path d="M8.500 9.500h3v3h-3z" fill="#ffb900"/></svg></button>
    <button aria-label="McAfee"><svg width="16" height="16" viewBox="0 0 16 16"><path d="M1.500 1L8 4.500 14.500 1v11.500L8 15.500l-6.500-3z" fill="#c01818"/><path d="M4.200 5L8 7l3.800-2v5.700L8 12.500l-3.800-1.800z" fill="#f3f3f3"/></svg></button>
    <button aria-label="Outlook"><svg width="16" height="16" viewBox="0 0 16 16"><path d="M2 6l9-5 5 5v8H2z" fill="#6cc4f5"/><path d="M3 5l8-4 2 2-9 6z" fill="#1a4fb0"/><path d="M2 15l14-8v6c0 1.500-1 2-2 2z" fill="#2a84e8"/><rect x="0" y="8" width="7" height="7" rx="1" fill="#1058c0"/><circle cx="3.500" cy="11.500" r="1.800" fill="none" stroke="#fff"/></svg></button>
    <button aria-label="Download manager"><svg width="16" height="16" viewBox="0 0 16 16"><circle cx="8.500" cy="7" r="6.500" fill="#2c5f9e"/><path d="M4 3c2-3 7-3 9 0L9 8 5 7z" fill="#3fae3a"/><path d="M1 8l6-1 1 3 6-3-2 6-6 2z" fill="#f2d21c" stroke="#7a6a10" stroke-width=".6"/><path d="M5 13l7-3-1 4-5 1z" fill="#2f7a2f"/></svg></button>
    <button class="run" aria-label="Chrome"><svg width="16" height="16" viewBox="0 0 16 16"><circle cx="8" cy="8" r="7.500" fill="#fbc116"/><path d="M8 8L1.500 4.300A7.500 7.500 0 0 1 14.500 4.300z" fill="#e33b2e"/><path d="M1.500 4.300A7.500 7.500 0 0 0 7.500 15.500L11 9.500 8 8 5 9.500z" fill="#2da44e"/><path d="M1.500 4.300H14.500" stroke="#e33b2e"/><circle cx="8" cy="8" r="3.700" fill="#fff"/><circle cx="8" cy="8" r="2.900" fill="#2f7de8"/></svg></button>
    <button class="run" aria-label="Teams"><svg width="18" height="18" viewBox="0 0 18 18"><circle cx="7" cy="4" r="2.500" fill="#5059c9"/><rect x="3" y="7" width="9" height="9" rx="2" fill="#7b83eb"/><rect x="0" y="8" width="7" height="7" rx="1" fill="#4048b0"/><path d="M2 10h3.500M3.700 10v4" stroke="#fff"/><circle cx="12.500" cy="12.500" r="3.500" fill="#dde3ea"/><circle cx="13.500" cy="4.500" r="4.500" fill="#13a10e"/><path d="M11.500 4.500l1.500 1.500 2.500-3" fill="none" stroke="#fff"/></svg></button>
    <button class="run" aria-label="WhatsApp"><svg width="18" height="18" viewBox="0 0 18 18"><path d="M1 17l1-4.500A7 7 0 1 1 5 15.800z" fill="#fff" stroke="#1d7a4a" stroke-width="1.500"/><path d="M5 7c0 4 3 6 6 6l1-2-2-1-1 1c-1-.5-2-1.500-2.200-2.500l.9-1-.7-2z" fill="#1d7a4a"/><circle cx="13.500" cy="4.500" r="4.500" fill="#1a6fd8"/><path d="M12.200 3.500c.3-1.500 2.800-1 2.400.5L12.300 6.500H15" fill="none" stroke="#fff" stroke-width=".9"/></svg></button>
    <button class="run cur" aria-label="Power BI Desktop"><svg width="16" height="16" viewBox="0 0 16 16"><path d="M0 0h16v15H0z" fill="#1f6fd0"/><path d="M9 0h7v16H9z" fill="#d9940f"/><path d="M5 4h6v12H5z" fill="#f0b72a"/><path d="M1 8h6v8H1z" fill="#fbdc7a"/></svg></button>
  </div>
  <div class="tray">
    <button class="plain" aria-label="Show hidden icons"><svg width="8" height="5" viewBox="0 0 8 5" fill="none" stroke="#222" stroke-width="1.200"><path d="M.5 4.500l3.500-4 3.500 4"/></svg></button>
    <button class="plain" aria-label="OneDrive"><svg width="12" height="11" viewBox="0 0 12 11"><path d="M3 8a2.500 2.500 0 0 1 0-5c1-3 6-3 7 0" fill="none" stroke="#333"/><path d="M4 8l5-5" stroke="#333"/><circle cx="8.500" cy="7.500" r="3.200" fill="#d13438"/><path d="M7.500 6.500l2 2M9.500 6.500l-2 2" stroke="#fff" stroke-width=".8"/></svg></button>
    <button class="plain lang" lang="ar">ع</button>
    <button class="plain net" aria-label="Network, volume and battery">
      <svg width="12" height="9" viewBox="0 0 12 9" fill="none" stroke="#222"><path d="M1 3.500c3-3 7-3 10 0M2.800 5.300c2-2 4.400-2 6.400 0M4.500 7c1-1 2-1 3 0"/><circle cx="6" cy="8" r=".6" fill="#222"/></svg>
      <svg width="12" height="10" viewBox="0 0 12 10" fill="none" stroke="#222"><path d="M.5 3.500h2L5.500 1v8L2.500 6.500h-2zM7 3.500c1 1 1 2 0 3M8.500 2c1.800 2 1.800 4 0 6M10 .8c2.300 3 2.300 5.500 0 8.400" stroke-width=".8"/></svg>
      <svg width="14" height="8" viewBox="0 0 14 8"><rect x=".5" y=".5" width="11.500" height="7" rx="2" fill="#fff" stroke="#222"/><rect x="2" y="2" width="8.500" height="4" fill="#111"/><path d="M13.300 2.500v3" stroke="#222"/></svg>
    </button>
    <button class="plain clock">1:01 AM<br>3/10/2026</button>
  </div>
</footer>
</body>
</html>
```
FILE: styles.css
```css
* { box-sizing: border-box; }
html, body { height: 100%; }
body {
  margin: 0;
  display: flex;
  flex-direction: column;
  min-height: 100vh;
  font-family: Roboto, "Noto Sans", "DejaVu Sans", sans-serif;
  font-size: 8px;
  line-height: 11px;
  color: #1a1a1a;
  background: #fafafa;
}
button, input { font: inherit; color: inherit; }
button { border: 0; background: none; padding: 0; margin: 0; white-space: nowrap; }
h2, h3, h4, h5, ul { margin: 0; padding: 0; font-size: inherit; font-weight: 400; }
svg { display: block; flex: none; }
.defs { position: absolute; width: 0; height: 0; }
.plain { display: flex; align-items: center; }

/* Title bar */
.titlebar {
  display: grid;
  grid-template-columns: minmax(0, 5fr) 264px minmax(0, 4fr);
  align-items: center;
  height: 23px;
  background: #3b3a39;
  border-bottom: 1px solid #111;
  color: #fff;
  flex: none;
}
.title-left { display: flex; align-items: center; gap: 8px; padding-left: 10px; }
.title-left .doc { gap: 3px; margin-left: -5px; }
.title-search {
  display: flex;
  align-items: center;
  gap: 6px;
  height: 17px;
  padding-left: 11px;
  margin-left: 4px;
  background: #d2d0ce;
  border: 1px solid #e4e2e0;
  border-radius: 2px;
}
input[type="text"] { flex: 1; min-width: 0; width: 0; border: 0; padding: 0; background: none; outline: 0; }
.title-search input { font-size: 9px; }
.title-search input::placeholder { color: #1e4e45; opacity: 1; }
.title-right { display: flex; align-items: center; justify-content: flex-end; gap: 21px; padding-right: 10px; }
.signin { gap: 6px; }

/* Tabs */
.tabs { display: flex; height: 20px; padding-left: 4px; flex: none; font-size: 9px; line-height: 12px; align-items: stretch; color: #111; }
.tabs button { padding: 0 10px; }
.tabs .on { font-weight: 600; padding-left: 15px; }
.tabs .on span { display: block; border-bottom: 1px solid #1c6b56; padding: 2px 0; }
.tabs .ctx { font-weight: 600; color: #0b4a3c; background: #fff; margin-right: 1px; padding: 0 11px; }
.tabs .share {
  display: flex;
  align-items: center;
  gap: 4px;
  align-self: center;
  height: 16px;
  margin: 0 4px 0 auto;
  padding: 0 3px;
  font-size: 8px;
  font-weight: 600;
  color: #fff;
  background: #117865;
  border-radius: 2px;
}

/* Ribbon */
.ribbon { display: flex; height: 62px; padding-top: 3px; border-bottom: 1px solid #8a8886; flex: none; }
.group { display: flex; flex-direction: column; justify-content: space-between; border-right: 1px solid #d2d0ce; }
.group h2 { font-size: 7px; line-height: 9px; text-align: center; white-space: nowrap; }
.items { display: grid; justify-content: center; align-items: start; }
.items > button { display: block; justify-self: center; text-align: center; line-height: 11px; }
.ico { width: 20px; height: 20px; margin: 2px auto 2px; }
.cv { display: inline-block; width: 6px; height: 4px; margin-left: 1px; vertical-align: 1px; }
.off { color: #b3b0ad; }
.clip { width: 105px; }
.clip .items { grid-template-columns: 32px 68px; }
.stack { display: flex; flex-direction: column; align-items: flex-start; }
.stack button { display: flex; align-items: center; gap: 3px; height: 15px; }
.data { width: 234px; }
.data .items { grid-template-columns: 30px 32px 38px 27px 26px 36px 34px; justify-content: start; padding-left: 3px; }
.queries { width: 75px; }
.queries .items { grid-template-columns: 39px 28px; }
.insert { width: 96px; }
.insert .items { grid-template-columns: 25px 26px 32px; }
.calc { width: 121px; }
.calc .items { grid-template-columns: 46px 32px 33px; }
.sens { width: 48px; }
.pub { width: 39px; }
.cop { width: 86px; }
.cop .items { grid-template-columns: 48px 28px; }
.sens .items, .pub .items { grid-template-columns: 36px; }
.collapse { margin: auto 3px 3px auto; }

/* Work area */
.work { flex: 1; min-height: 0; display: flex; }
.rail { width: 27px; flex: none; background: #f3f2f1; border-right: 1px solid #c8c6c4; }
.rail button { display: grid; place-items: center; width: 100%; height: 26px; border-left: 2px solid transparent; }
.rail .on { border-color: #117865; }
.canvas { flex: 1; min-width: 0; display: flex; flex-direction: column; background: #3a3a3a; }
.drillhead { display: flex; align-items: center; height: 39px; padding: 12px 0 0 11px; background: #fff; border-bottom: 1px solid #222; flex: none; color: #444; }
.back { gap: 10px; height: 20px; padding-right: 14px; margin-right: 9px; border-right: 1px solid #777; color: #35606e; }
.drillhead strong { color: #222; margin-right: 9px; }
.vis-tools { display: flex; gap: 2px; margin-left: auto; align-self: flex-start; margin-top: -12px; }
.vis-tools button { display: grid; place-items: center; width: 16px; height: 15px; background: #333; border: 1px solid #555; }
.chart { flex: 1; min-height: 0; display: flex; }
.pie { flex: 1; min-width: 0; width: 0; height: 100%; }
.pie text { font: 8px "Liberation Sans", Arial, sans-serif; fill: #f4f4f4; }
.legend { width: 70px; flex: none; align-self: center; padding: 0 0 4px 1px; font: 9px/13px "Liberation Sans", Arial, sans-serif; color: #f4f4f4; white-space: nowrap; }
.legend ul { list-style: none; line-height: 16px; }
.legend li::before { content: ""; display: inline-block; width: 7px; height: 7px; margin-right: 1px; border-radius: 50%; background: #546c80; vertical-align: -1px; }
.legend .r1::before { background: #fdb813; }
.filters { display: flex; flex-direction: column; align-items: center; justify-content: flex-start; gap: 9px; width: 22px; flex: none; padding-top: 8px; background: #000; color: #fff; font-size: 10px; font-weight: 600; }
.filters span { writing-mode: vertical-rl; margin-top: -4px; line-height: 12px; }

/* Side panes */
.viz { width: 118px; flex: none; display: flex; flex-direction: column; background: #f3f2f1; border-right: 1px solid #d2d0ce; }
.fields { width: 117px; flex: none; background: #f3f2f1; }
.work h3 { display: flex; justify-content: space-between; align-items: center; height: 24px; padding: 0 5px; font-size: 10px; font-weight: 600; }
.viz h4 { padding-left: 6px; font-weight: 600; }
.modes { display: flex; justify-content: space-between; padding: 2px 6px 8px; border-bottom: 1px solid #b5b3b1; }
.modes button { display: grid; place-items: center; width: 20px; height: 20px; }
.modes .on { background: #dddbd9; }
.notch { margin: -6px 0 0 10px; }
.gallery { display: grid; grid-template-columns: repeat(6, 1fr); grid-template-rows: repeat(8, 1fr); height: 146px; margin: 4px 3px 0 4px; flex: none; }
.gallery button { display: grid; place-items: center; }
.gallery svg { width: 14px; height: 14px; }
.gallery .picked { outline: 1px solid #222; outline-offset: -1px; background: #fff; }
.gallery .letter { font-size: 12px; font-weight: 600; color: #1f5fa8; }
.wells { position: relative; flex: 1; min-height: 0; overflow: hidden; margin-top: 2px; padding: 4px 3px 0 3px; border-top: 1px solid #e1dfdd; }
.wells h5 { padding-left: 5px; height: 14px; line-height: 14px; }
.well { background: #fff; border: 1px dashed #c8c6c4; height: 24px; margin: 2px 0 4px; padding: 1px 2px; }
.well.empty { height: 18px; margin: 2px 0 5px; padding: 0 6px; line-height: 16px; }
.pill { display: flex; align-items: center; gap: 5px; height: 15px; padding: 0 1px; background: #f0efee; border: 1px solid #c8c6c4; white-space: nowrap; }
.pill button:first-of-type { margin-left: auto; }
.wells .drill { font-weight: 600; }
.thumb { position: absolute; right: 0; top: 1px; width: 3px; height: 142px; border-radius: 2px; background: #797775; }
.field-search { display: flex; align-items: center; gap: 4px; height: 17px; margin: 4px 2px 0 3px; padding: 0 6px; font-size: 9px; background: #fff; border: 1px solid #b3b0ad; border-radius: 3px; }
.field-search input::placeholder { color: #444; opacity: 1; }
.tree { display: flex; align-items: center; gap: 5px; margin: 6px 0 0 9px; height: 14px; }
.tree svg + svg { margin-right: -5px; }

/* Status bar */
.status { display: flex; align-items: center; justify-content: space-between; height: 16px; padding: 1px 11px 0 3px; background: #f3f2f1; border-top: 1px solid #e1dfdd; border-bottom: 1px solid #111; flex: none; }
.zoomer { display: flex; align-items: center; gap: 4px; }
.zoomer .pct { padding: 0 4px; }
.zoomer input { appearance: none; width: 66px; height: 9px; margin: 0; background: linear-gradient(#666, #666) center / 100% 1px no-repeat; }
.zoomer input::-webkit-slider-thumb { appearance: none; width: 3px; height: 8px; background: #222; }

/* Taskbar */
.taskbar { display: grid; grid-template-columns: 1fr auto 1fr; align-items: center; height: 31px; padding-right: 7px; flex: none; background: linear-gradient(90deg, #ebebee 0, #d7ddea 8%, #d9dfeb 22%, #efefef 38%, #efefef 100%); }
.weather { display: flex; align-items: center; gap: 3px; padding-left: 12px; text-align: left; line-height: 11px; }
.weather small { display: block; font-size: 8px; color: #555; }
.apps { display: flex; align-items: center; gap: 4px; margin-right: 3px; }
.apps button { position: relative; display: grid; place-items: center; width: 25px; height: 26px; }
.apps .run::after { content: ""; position: absolute; bottom: 1px; left: 10px; width: 5px; height: 2px; border-radius: 1px; background: #777; }
.apps .cur { background: #fafafa; border-radius: 3px; }
.apps .cur::after { left: 8px; width: 10px; background: #1a6fd0; }
.task-search { display: flex; align-items: center; gap: 7px; width: 141px; height: 20px; padding: 0 3px 0 7px; font-size: 9px; background: #fafafa; border: 1px solid #e0e0e0; border-radius: 10px; }
.task-search input::placeholder { color: #444; opacity: 1; }
.tray { display: flex; align-items: center; justify-content: flex-end; gap: 14px; padding-right: 5px; }
.net { gap: 4px; }
.lang { font-size: 9px; }
.tray .clock { display: block; text-align: right; }
```
